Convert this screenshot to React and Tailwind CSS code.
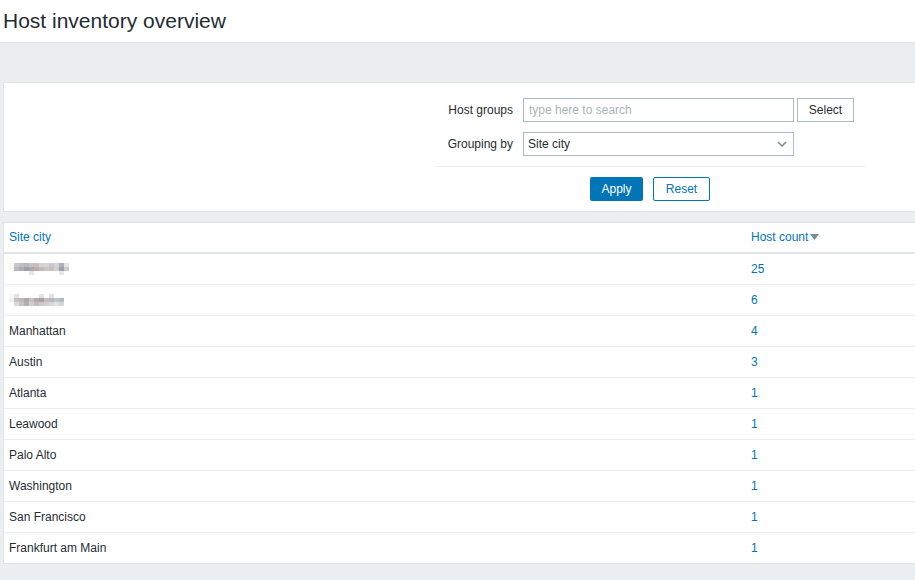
import React from "react";

const rows = [
  { city: null, w: 1, count: "25" },
  { city: null, w: 2, count: "6" },
  { city: "Manhattan", count: "4" },
  { city: "Austin", count: "3" },
  { city: "Atlanta", count: "1" },
  { city: "Leawood", count: "1" },
  { city: "Palo Alto", count: "1" },
  { city: "Washington", count: "1" },
  { city: "San Francisco", count: "1" },
  { city: "Frankfurt am Main", count: "1" },
];

const blur1 = [
  ["#fdf8ee", "#c9c7cc", "#c0bfc5", "#b7b9c3", "#c6c2c5", "#c8bfbd", "#d5d4d6", "#dbd5cf", "#c9c6cb", "#d3d5d6", "#aeb0bd", "#e3e5e7"],
  ["#fcf7ee", "#b9b8bf", "#aeacb4", "#9aa1aa", "#b0a7a8", "#bdafac", "#bfbcc1", "#cbc8c0", "#c7c0c0", "#d1d0ce", "#9c9eaa", "#cbccd0"],
  ["#ffffff", "#ffffff", "#ffffff", "#ffffff", "#e5e5e9", "#ffffff", "#ffffff", "#ffffff", "#ffffff", "#ffffff", "#e6e6ea", "#ffffff"],
];
const blur2 = [
  ["#fbf7f0", "#e3e3e6", "#ffffff", "#ffffff", "#ffffff", "#ffffff", "#e6e1e0", "#ffffff", "#e4e1e3", "#ffffff", "#ffffff"],
  ["#eeeef0", "#c1bec4", "#bdb8b9", "#ada5a9", "#c5c0c1", "#b3aaac", "#ad9fa7", "#c1bec1", "#b9b9bd", "#c1c4c6", "#b4bdbf"],
  ["#ffffff", "#dcdade", "#c8c3c5", "#b8aeb2", "#d2cecf", "#c1b9bb", "#cfc7ca", "#d2cfd1", "#d8d7da", "#e0e2e3", "#d3d7d7"],
];

function Blur({ data }) {
  return (
    <div className="flex flex-col">
      {data.map((r, i) => (
        <div key={i} className="flex">
          {r.map((c, j) => (
            <div key={j} className="w-[5px] h-[4px]" style={{ backgroundColor: c }} />
          ))}
        </div>
      ))}
    </div>
  );
}

export default function App() {
  return (
    <div
      className="w-[915px] h-[580px] overflow-hidden bg-[#ebeef0] text-[12px] text-[#1f2c33]"
      style={{ fontFamily: '"Liberation Sans", Arial, sans-serif' }}
    >
      {/* Header */}
      <div className="h-[43px] bg-white border-b border-[#dfe4e7] flex items-center pl-[3px]">
        <h1 className="text-[21px] leading-none font-normal text-[#1f2c33] -mt-[2px]">Host inventory overview</h1>
      </div>

      {/* Filter */}
      <div className="mt-[39px] ml-[3px] bg-white border border-r-0 border-[#dfe4e7] h-[130px]">
        <div className="ml-[431px] w-[430px] pt-[15px]">
          <div className="flex items-center h-[24px]">
            <div className="w-[78px] text-right">Host groups</div>
            <div className="ml-[10px] w-[271px] h-[24px] border border-[#acbbc2] flex items-center px-[5px] text-[#acb3b8]">
              type here to search
            </div>
            <div className="ml-[3px] w-[57px] h-[24px] border border-[#acbbc2] flex items-center justify-center bg-white">
              Select
            </div>
          </div>
          <div className="flex items-center h-[24px] mt-[10px]">
            <div className="w-[78px] text-right">Grouping by</div>
            <div className="ml-[10px] w-[271px] h-[24px] border border-[#acbbc2] flex items-center justify-between pl-[4px] pr-[6px]">
              <span>Site city</span>
              <svg width="10" height="6" viewBox="0 0 10 6" fill="none">
                <path d="M1 1 L5 5 L9 1" stroke="#768d99" strokeWidth="1.5" />
              </svg>
            </div>
          </div>
          <div className="border-t border-[#ebeef0] mt-[10px] pt-[10px] flex justify-center gap-[10px]">
            <div className="w-[53px] h-[24px] bg-[#0275b8] text-white flex items-center justify-center rounded-[2px]">
              Apply
            </div>
            <div className="w-[57px] h-[24px] border border-[#0275b8] text-[#0275b8] flex items-center justify-center rounded-[2px] bg-white">
              Reset
            </div>
          </div>
        </div>
      </div>

      {/* Table */}
      <div className="mt-[10px] ml-[3px] bg-white border border-r-0 border-[#dfe4e7]">
        <table className="w-full border-collapse">
          <thead>
            <tr className="h-[30px] border-b-2 border-[#dfe4e7]">
              <th className="text-left font-normal pl-[5px] pb-[2px] text-[#0275b8] w-[747px]">Site city</th>
              <th className="text-left font-normal pb-[2px] text-[#0275b8]">
                <span className="inline-flex items-center gap-[2px]">
                  Host count
                  <svg width="9" height="6" viewBox="0 0 9 6">
                    <path d="M0 0 L9 0 L4.5 6 Z" fill="#768d99" />
                  </svg>
                </span>
              </th>
            </tr>
          </thead>
          <tbody>
            {rows.map((r, i) => (
              <tr key={i} className={"h-[31px] " + (i < rows.length - 1 ? "border-b border-[#ebeef0]" : "")}>
                <td className="pl-[5px]">
                  {r.city ? (
                    r.city
                  ) : (
                    <Blur data={r.w === 1 ? blur1 : blur2} />
                  )}
                </td>
                <td className="text-[#0275b8]">{r.count}</td>
              </tr>
            ))}
          </tbody>
        </table>
      </div>
    </div>
  );
}
